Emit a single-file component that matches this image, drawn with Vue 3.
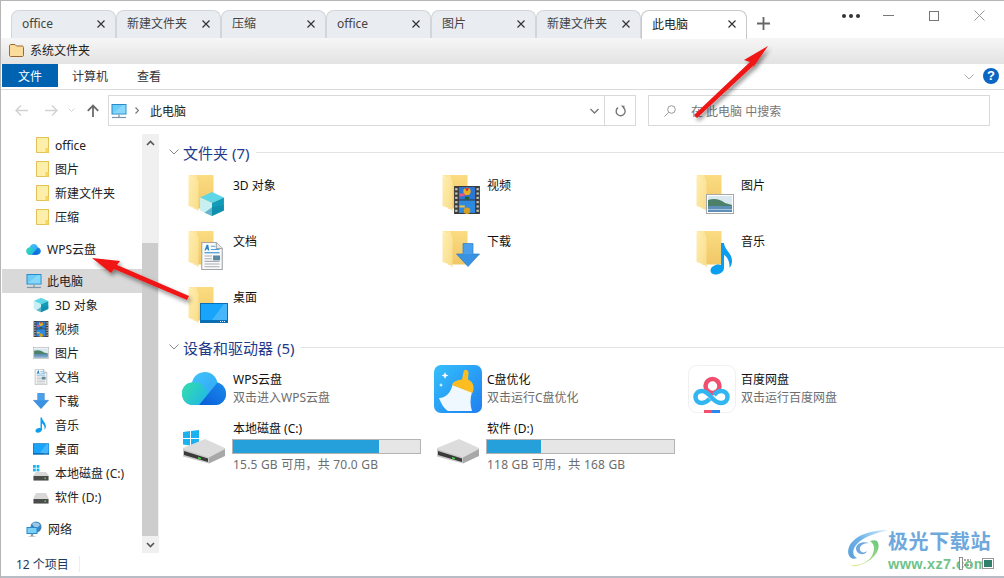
<script setup>
const tabs = [
  { t: 'office' }, { t: '新建文件夹' }, { t: '压缩' }, { t: 'office' },
  { t: '图片' }, { t: '新建文件夹' }, { t: '此电脑', active: true },
]
const quick = ['office', '图片', '新建文件夹', '压缩']
const pcItems = [
  { t: '3D 对象', i: 's3d' }, { t: '视频', i: 'svideo' }, { t: '图片', i: 'spic' },
  { t: '文档', i: 'sdoc' }, { t: '下载', i: 'sdown' }, { t: '音乐', i: 'smusic' },
  { t: '桌面', i: 'sdesk' }, { t: '本地磁盘 (C:)', i: 'sdiskc' }, { t: '软件 (D:)', i: 'sdisk' },
]
const folders = [
  { t: '3D 对象', i: 's3d', x: 20, y: 20, w: 26, h: 26 },
  { t: '视频', i: 'svideo', x: 21, y: 15, w: 26, h: 28 },
  { t: '图片', i: 'spic', x: 19, y: 23, w: 28, h: 20 },
  { t: '文档', i: 'sdoc', x: 22, y: 15, w: 22, h: 28 },
  { t: '下载', i: 'sdown', x: 23, y: 15, w: 24, h: 26 },
  { t: '音乐', i: 'smusic', x: 23, y: 15, w: 24, h: 33 },
  { t: '桌面', i: 'sdesk', x: 21, y: 20, w: 28, h: 20 },
]
const apps = [
  { t: 'WPS云盘', s: '双击进入WPS云盘', i: 'awps' },
  { t: 'C盘优化', s: '双击运行C盘优化', i: 'aclean' },
  { t: '百度网盘', s: '双击运行百度网盘', i: 'abaidu' },
]
const disks = [
  { t: '本地磁盘 (C:)', s: '15.5 GB 可用，共 70.0 GB', pct: 78, i: 'bdiskc' },
  { t: '软件 (D:)', s: '118 GB 可用，共 168 GB', pct: 29, i: 'bdisk' },
]
</script>

<template>
  <div class="win">
    <svg class="defs" width="0" height="0">
      <defs>
        <linearGradient id="fb" x1="0" y1="0" x2="0" y2="1"><stop offset="0" stop-color="#fbdc82"/><stop offset="1" stop-color="#f0c766"/></linearGradient>
        <linearGradient id="ff" x1="0" y1="0" x2="1" y2="1"><stop offset="0" stop-color="#ffeeb0"/><stop offset="1" stop-color="#f9dc8a"/></linearGradient>
        <linearGradient id="cl2" x1="0" y1="0" x2="1" y2="1"><stop offset="0" stop-color="#44c8fc"/><stop offset="1" stop-color="#2a9cf2"/></linearGradient>
        <linearGradient id="cl3" x1="0" y1="0" x2="1" y2="0.6"><stop offset="0" stop-color="#34e0a8"/><stop offset="1" stop-color="#22b8e4"/></linearGradient>
        <linearGradient id="cl4" x1="0" y1="1" x2="1" y2="0"><stop offset="0" stop-color="#0a5cd8"/><stop offset="1" stop-color="#1a8cec"/></linearGradient>
        <linearGradient id="cb" x1="0" y1="0" x2="1" y2="1"><stop offset="0" stop-color="#34c0fb"/><stop offset="1" stop-color="#1f7ff0"/></linearGradient>
        <linearGradient id="sw1" x1="1" y1="0" x2="0" y2="1"><stop offset="0" stop-color="#d8ecfb"/><stop offset="0.5" stop-color="#6db3e8"/><stop offset="1" stop-color="#5c9fdd"/></linearGradient>
        <linearGradient id="sw2" x1="1" y1="0" x2="0" y2="1"><stop offset="0" stop-color="#62c77c"/><stop offset="1" stop-color="#f0ec9c"/></linearGradient>

        <symbol id="s3d" viewBox="0 0 24 24">
          <path d="M12 1 23 6 12 11 1 6Z" fill="#5fd6e6"/><path d="M1 6 12 11V23L1 18Z" fill="#c8f0f2"/><path d="M23 6V18L12 23V11Z" fill="#129cb8"/><path d="M12 15 23 13V18L12 23 5 20Z" fill="#0f87a8" opacity=".55"/>
        </symbol>
        <symbol id="svideo" viewBox="0 0 24 26">
          <rect x="0" y="0" width="24" height="26" fill="#3c3c3c"/><rect x="4.5" y="1" width="15" height="11.5" fill="#2e76d6"/><rect x="4.5" y="13.5" width="15" height="11.5" fill="#2e8ae0"/>
          <circle cx="12" cy="5" r="3.4" fill="#e8b020"/><path d="M12 5 10 2H14Z" fill="#c62b3c"/><path d="M5 7H10V9L5 10Z" fill="#e35a80"/><rect x="10" y="10" width="4" height="2.5" fill="#226030"/>
          <circle cx="12" cy="23" r="3" fill="#d8a020"/><path d="M5 18H10V20H5Z" fill="#e8c050"/>
          <g fill="#c8c8c0"><rect x="1" y="2" width="2.2" height="2"/><rect x="1" y="6" width="2.2" height="2"/><rect x="1" y="10" width="2.2" height="2"/><rect x="1" y="14" width="2.2" height="2"/><rect x="1" y="18" width="2.2" height="2"/><rect x="1" y="22" width="2.2" height="2"/><rect x="20.8" y="2" width="2.2" height="2"/><rect x="20.8" y="6" width="2.2" height="2"/><rect x="20.8" y="10" width="2.2" height="2"/><rect x="20.8" y="14" width="2.2" height="2"/><rect x="20.8" y="18" width="2.2" height="2"/><rect x="20.8" y="22" width="2.2" height="2"/></g>
        </symbol>
        <symbol id="spic" viewBox="0 0 28 20">
          <rect x=".5" y=".5" width="27" height="19" fill="#fff" stroke="#a8a8a8"/><rect x="2" y="2" width="24" height="16" fill="#d8e8ee"/>
          <path d="M2 6C8 4 14 5 19 9L26 11V13H2Z" fill="#4d8068"/><rect x="2" y="12" width="24" height="6" fill="#5d8fb8"/><rect x="2" y="15" width="24" height="1" fill="#a8c6da"/>
        </symbol>
        <symbol id="sdoc" viewBox="0 0 20 26">
          <path d="M.5.5H14L19.5 6V25.5H.5Z" fill="#fafafa" stroke="#a0a4a8"/><path d="M14 .5V6H19.5" fill="#e8e8e8" stroke="#a0a4a8"/>
          <path d="M3 8 5 2.5H6.5L7.5 8H6.2L6 6.8H4.6L4.2 8Z" fill="#2a86c8"/><path d="M9 4H13M9 7H17" stroke="#4aa0da"/><path d="M3 10H17" stroke="#2f8ccc"/>
          <path d="M3 13H10M3 15.5H10M3 18H17M3 20.5H17M3 23H17" stroke="#a8adb2"/><rect x="11" y="12.5" width="6.5" height="4.5" fill="#5b8aa0"/>
        </symbol>
        <symbol id="sdown" viewBox="0 0 24 24">
          <path d="M7 .5H17V11H23.5L12 23.5.5 11H7Z" fill="#3a92e2" stroke="#2f7cc6" stroke-width=".7"/><path d="M7.5 1H16.5V11H7.5Z" fill="#4aa0ea"/>
        </symbol>
        <symbol id="smusic" viewBox="0 0 24 33">
          <path d="M11 1H14C14.500 8 22 11 22 19C22 22 21 24 19.500 26C20 20 17.500 15 14 13V26C14 30 9.500 32.500 5.500 32.500C2.500 32.500.5 31 .5 28.500C.5 25 5 22.500 8.500 22.500C9.500 22.500 10.400 22.700 11 23Z" fill="#0a9ef0"/>
        </symbol>
        <symbol id="sdesk" viewBox="0 0 28 20">
          <rect width="28" height="20" fill="#0a6eb4"/><rect x="1" y="1" width="26" height="16" fill="#18a4fa"/><path d="M12 17 24 1H27V17Z" fill="#45b6fb"/><path d="M20 18.500H26" stroke="#e8f4ff" stroke-dasharray="1 1"/>
        </symbol>
        <symbol id="sfolder" viewBox="0 0 26 41">
          <path d="M6 1H25.500V34.500H6Z" fill="url(#fb)"/><path d="M.5 1.200 10.500 9V37.500L8 34.600.5 32Z" fill="url(#ff)"/><path d="M.5 1 8 1 10.500 9Z" fill="#fde7a0"/>
        </symbol>
        <symbol id="snav" viewBox="0 0 13 16">
          <rect x=".5" y=".5" width="12" height="15" fill="#fdeeaa" stroke="#e3c257"/><path d="M9.500 11H12.500V15.500H9.500Z" fill="#f9d55a"/>
        </symbol>
        <symbol id="spc" viewBox="0 0 16 16">
          <rect x=".5" y="1" width="15" height="10.500" fill="#2a8ac8"/><rect x="1.500" y="2" width="13" height="8.500" fill="#6cccf8"/><path d="M2 10 12 2H14.500V10.500H2Z" fill="#9fe0fc" opacity=".55"/><path d="M7.300 11.500H8.700V14H7.300Z" fill="#8aa0ae"/><path d="M1 14.500H15" stroke="#7a96a8" stroke-width="1.200"/>
        </symbol>
        <symbol id="sdisk" viewBox="0 0 16 16">
          <path d="M3 4H13L15.500 9V14.500H.5V9Z" fill="#d8d8d8"/><rect x=".5" y="10" width="15" height="4.500" fill="#4c4c4c"/><rect x="11.500" y="11.500" width="1.500" height="1.500" fill="#44d944"/>
        </symbol>
        <symbol id="sdiskc" viewBox="0 0 16 16">
          <g fill="#1cb2f0"><rect x="0" y="0" width="2.800" height="2.800"/><rect x="3.600" y="0" width="2.800" height="2.800"/><rect x="0" y="3.600" width="2.800" height="2.800"/><rect x="3.600" y="3.600" width="2.800" height="2.800"/></g>
          <path d="M3 7H13L15.500 10V15.500H.5V10Z" fill="#d8d8d8"/><rect x=".5" y="11" width="15" height="4.500" fill="#4c4c4c"/><rect x="11.500" y="12.500" width="1.500" height="1.500" fill="#44d944"/>
        </symbol>
        <symbol id="scloud" viewBox="0 0 44 34">
          <path d="M33 33H11C4 33 0 27.500 0 21.500C0 15 5 10.500 10 10.500C11.500 4 17 0 23 0C29.500 0 34 4.500 35.500 10.500C40.500 12 44 16.500 44 22C44 28 39.500 33 33 33Z" fill="url(#cl2)"/>
          <path d="M11 10.500C5 10.500 0 15 0 21.500C0 27.500 4 33 11 33H17L28 22 20 13C17 10.500 14 10 11 10.500Z" fill="url(#cl3)"/>
          <path d="M44 22C44 28 39.500 33 33 33H17L35.500 10.500C40.500 12 44 16.500 44 22Z" fill="url(#cl4)"/>
        </symbol>
        <symbol id="sclean" viewBox="0 0 48 48">
          <rect width="48" height="48" rx="7" fill="url(#cb)"/>
          <path d="M5 33C12 33 17 27 18.500 20L38 27C36 34 36 40 38 46L14 46C10 44 7 38 5 33Z" fill="#f0f8ff"/>
          <path d="M18 20C19 16 24 15 28 14.500L29.500 7C30 4 34 4 34.500 7.500L34 14.500C38 16 41.500 21 38.500 28Z" fill="#fbbd20"/>
          <path d="M11 7 12 9.500 14.500 10.500 12 11.500 11 14 10 11.500 7.500 10.500 10 9.500Z" fill="#fff"/><path d="M7 18 7.700 19.500 9 20 7.700 20.700 7 22 6.300 20.700 5 20 6.300 19.500Z" fill="#dff"/>
        </symbol>
        <symbol id="sbaidu" viewBox="0 0 48 48">
          <rect x=".5" y=".5" width="47" height="47" rx="8" fill="#fff" stroke="#f0f0f0"/>
          <circle cx="24.500" cy="21" r="7" fill="none" stroke="#f0506e" stroke-width="4.500"/>
          <path d="M21.500 34C19 36.500 16.500 38 14 38C10 38 7.500 35.500 7.500 32C7.500 28.500 10 26 14 26C19 26 23 32 25.500 34.500C28 37 30 38 33 38C37 38 39.500 35.500 39.500 32C39.500 28.500 37 26 33 26C30 26 28 27.500 26 30" fill="none" stroke="#32b6f2" stroke-width="4.500"/>
          <rect x="16" y="45" width="8" height="3" fill="#f0506e"/><rect x="24" y="45" width="8" height="3" fill="#2a86f0"/>
        </symbol>
        <symbol id="shdd" viewBox="0 0 44 26">
          <path d="M22 1 42 10V14L26 20 0 12V10Z" fill="#dcdcdc"/>
          <path d="M42 11V18L26 25.500V19.500Z" fill="#a8a8a8"/>
          <path d="M0 11 26 19.500V25.500L0 18.500Z" fill="#c8c8c8"/>
          <path d="M1 13 25 20.500V24L1 17Z" fill="#3a3a3a"/>
          <path d="M15 19 18 20V21.500L15 20.500Z" fill="#44d944"/>
        </symbol>
      </defs>
    </svg>

    <div class="tabbar">
      <div v-for="(tab, i) in tabs" :key="i" class="tab" :class="{ active: tab.active }">
        <span class="tab-label">{{ tab.t }}</span>
        <svg class="tab-x" width="8" height="8" viewBox="0 0 8 8"><path d="M.5.5 7.500 7.500M7.500.5.500 7.500" stroke="#333" stroke-width="1.200"/></svg>
      </div>
      <svg class="plus" width="13" height="13" viewBox="0 0 13 13"><path d="M6.500 0V13M0 6.500H13" stroke="#666" stroke-width="1.800"/></svg>
      <div class="dots"><i></i><i></i><i></i></div>
      <div class="winctl">
        <svg width="11" height="11" viewBox="0 0 11 11"><path d="M0 5.500H11" stroke="#777"/></svg>
        <svg width="10" height="10" viewBox="0 0 10 10"><rect x=".5" y=".5" width="9" height="9" fill="none" stroke="#777"/></svg>
        <svg width="11" height="11" viewBox="0 0 11 11"><path d="M.5.500 10.500 10.500M10.500.5.500 10.500" stroke="#999"/></svg>
      </div>
    </div>

    <div class="titlestrip">
      <svg width="15" height="13" viewBox="0 0 15 13"><path d="M.5 2C.5 1 1 .5 2 .5H6L7.500 2H13C14 2 14.500 2.500 14.500 3.500V11C14.500 12 14 12.500 13 12.500H2C1 12.500.5 12 .5 11Z" fill="#fbdc9a" stroke="#9c6a30"/></svg>
      <span>系统文件夹</span>
    </div>

    <div class="ribbon">
      <div class="rtab file">文件</div>
      <div class="rtab">计算机</div>
      <div class="rtab second">查看</div>
      <svg class="rchev" width="10" height="6" viewBox="0 0 10 6"><path d="M.5.5 5 5 9.500.5" fill="none" stroke="#aaa"/></svg>
      <div class="help">?</div>
    </div>

    <div class="navbar">
      <div class="navbtns">
        <svg width="13" height="11" viewBox="0 0 13 11"><path d="M6 .5 1 5.500 6 10.500M1 5.500H13" fill="none" stroke="#d2d2d2" stroke-width="1.500"/></svg>
        <svg width="13" height="11" viewBox="0 0 13 11"><path d="M7 .5 12 5.500 7 10.500M12 5.500H0" fill="none" stroke="#d2d2d2" stroke-width="1.500"/></svg>
        <svg width="7" height="4" viewBox="0 0 7 4"><path d="M.5.5 3.500 3.500 6.500.5" fill="none" stroke="#d2d2d2"/></svg>
        <svg width="12" height="13" viewBox="0 0 12 13"><path d="M6 13V1.500M.8 6.800 6 1.500 11.200 6.800" fill="none" stroke="#6a6a6a" stroke-width="1.800"/></svg>
      </div>
      <div class="address">
        <svg width="16" height="16"><use href="#spc"/></svg>
        <svg class="crumb" width="4" height="7" viewBox="0 0 4 7"><path d="M.5.5 3.500 3.500.5 6.500" fill="none" stroke="#777" stroke-width="1.200"/></svg>
        <span>此电脑</span>
        <svg class="adrop" width="9" height="6" viewBox="0 0 9 6"><path d="M.5 1 4.500 5 8.500 1" fill="none" stroke="#777" stroke-width="1.400"/></svg>
        <div class="refresh">
          <svg width="11" height="12" viewBox="0 0 11 12"><path d="M8.800 3A4.500 4.500 0 1 1 3 2.600" fill="none" stroke="#777" stroke-width="1.400"/><path d="M6 .5 9.500 .8 9.200 4.500Z" fill="#777"/></svg>
        </div>
      </div>
      <div class="search">
        <svg width="12" height="12" viewBox="0 0 12 12"><circle cx="7.500" cy="4.500" r="3.800" fill="none" stroke="#999"/><path d="M4.800 7.200.5 11.500" stroke="#999"/></svg>
        <span>在 此电脑 中搜索</span>
      </div>
    </div>

    <div class="main">
      <aside class="side">
        <div class="tree">
          <div v-for="q in quick" :key="q" class="row sub">
            <svg class="navf" width="13" height="16"><use href="#snav"/></svg><span>{{ q }}</span>
          </div>
          <div class="row top gapped">
            <svg width="15" height="11"><use href="#scloud"/></svg><span>WPS云盘</span>
          </div>
          <div class="row top gapped sel">
            <svg width="16" height="16"><use href="#spc"/></svg><span>此电脑</span>
          </div>
          <div v-for="p in pcItems" :key="p.t" class="row sub">
            <span class="slot"><svg width="16" height="16"><use :href="'#' + p.i"/></svg></span><span>{{ p.t }}</span>
          </div>
          <div class="row top gapped">
            <svg width="16" height="16" viewBox="0 0 16 16">
              <circle cx="10" cy="6" r="5.500" fill="#3a84c0"/><path d="M6 3C8 1 12 1 14 4L10 8Z" fill="#9cc8e4"/>
              <rect x=".5" y="6" width="11" height="7" fill="#2a8ac8"/><rect x="1.500" y="7" width="9" height="5" fill="#7ad0f8"/><path d="M5 13H7V15H5ZM2.500 15.500H9.500" fill="#8aa0ae" stroke="#8aa0ae" stroke-width=".5"/>
            </svg><span>网络</span>
          </div>
        </div>
        <div class="scroll">
          <svg class="sarrow" width="9" height="6" viewBox="0 0 9 6"><path d="M1 5 4.500 1.500 8 5" fill="none" stroke="#555" stroke-width="1.600"/></svg>
          <div class="strack"><div class="sthumb"></div></div>
          <div class="sdown"><svg width="9" height="6" viewBox="0 0 9 6"><path d="M1 1 4.500 4.500 8 1" fill="none" stroke="#555" stroke-width="1.600"/></svg></div>
        </div>
      </aside>

      <main class="content">
        <div class="group">
          <svg width="10" height="6" viewBox="0 0 10 6"><path d="M.5.5 5 5 9.500.5" fill="none" stroke="#888"/></svg>
          <span>文件夹 (7)</span><i></i>
        </div>
        <div class="grid folders">
          <div v-for="f in folders" :key="f.t" class="tile ftile">
            <svg class="fic" width="54" height="48" viewBox="0 0 54 48">
              <use href="#sfolder" x="9" y="3" width="26" height="41"/>
              <use :href="'#' + f.i" :x="f.x" :y="f.y" :width="f.w" :height="f.h"/>
            </svg>
            <span class="fname">{{ f.t }}</span>
          </div>
        </div>

        <div class="group devices">
          <svg width="10" height="6" viewBox="0 0 10 6"><path d="M.5.5 5 5 9.500.5" fill="none" stroke="#888"/></svg>
          <span>设备和驱动器 (5)</span><i></i>
        </div>
        <div class="grid drives">
          <div v-for="a in apps" :key="a.t" class="tile atile">
            <span class="aic">
              <svg v-if="a.i === 'awps'" class="wpsic" width="44" height="34"><use href="#scloud"/></svg>
              <svg v-else width="48" height="48"><use :href="a.i === 'aclean' ? '#sclean' : '#sbaidu'"/></svg>
            </span>
            <div class="atxt"><div class="an">{{ a.t }}</div><div class="as">{{ a.s }}</div></div>
          </div>
          <div v-for="d in disks" :key="d.t" class="tile dtile">
            <span class="dic">
              <svg v-if="d.i === 'bdiskc'" class="win10" width="16" height="17" viewBox="0 0 16 17"><g fill="#1cb2f0"><path d="M0 2 7 1V8H0Z"/><path d="M8 1 16 0V8H8Z"/><path d="M0 9H7V15.500L0 14.500Z"/><path d="M8 9H16V17L8 15.700Z"/></g></svg>
              <svg class="hdd" width="44" height="26"><use href="#shdd"/></svg>
            </span>
            <div class="dtxt">
              <div class="an">{{ d.t }}</div>
              <div class="bar"><div class="fill" :style="{ width: d.pct + '%' }"></div></div>
              <div class="as ds">{{ d.s }}</div>
            </div>
          </div>
        </div>
      </main>
    </div>

    <div class="status"><span>12 个项目</span><i></i></div>

    <svg class="arrows" width="1004" height="578" viewBox="0 0 1004 578">
      <defs><filter id="ash" x="-30%" y="-30%" width="160%" height="160%"><feDropShadow dx="2" dy="3" stdDeviation="2" flood-color="#000" flood-opacity=".45"/></filter></defs>
      <g filter="url(#ash)" fill="#f01414">
        <path d="M768 46 744 60 750 62 694 115 697 118 754 65 752 69Z"/>
        <path d="M92 258 120 261 117 265 189 296 187 300 114 269 111 273Z"/>
      </g>
    </svg>

    <div class="mark">
      <svg class="swirl" width="44" height="40" viewBox="0 0 44 40">
        <path d="M42 2C26 2 8 7 3 19C0 27 5 33 11 30C6 28 6 21 11 16C17 9 30 5 42 2Z" fill="url(#sw1)"/>
        <path d="M10 21C10 15 17 13 23 15C17 15 13 18 14 22C15 25 19 25 21 23C19 28 11 27 10 21Z" fill="#6fa9e0"/>
        <path d="M31 13C36 20 29 33 11 38C8 39 6 38 5 37C16 38 25 32 27 25C29 20 28 16 24 13C27 12 29 12 31 13Z" fill="url(#sw2)"/>
      </svg>
      <div class="mtxt">
        <div class="m1">极光下载站</div>
        <div class="m2">www.xz7.com</div>
      </div>
    </div>
    <svg class="stray" width="36" height="13" viewBox="0 0 36 13">
      <rect x=".5" y=".5" width="3" height="12" fill="#fff" stroke="#777" stroke-width=".8"/>
      <path d="M5 3H12M5 8H12" stroke="#555" stroke-dasharray="2 1"/>
      <rect x="23.500" y="1.500" width="11" height="10" fill="#fff" stroke="#999"/><rect x="25" y="3" width="8" height="7" fill="#2f7f6a"/>
    </svg>
  </div>
</template>

<style>
html, body { margin: 0; padding: 0; overflow: hidden; background: #fff; }
</style>

<style scoped>
.win {
  position: relative; width: 1004px; height: 578px; overflow: hidden; box-sizing: border-box;
  background: #fff; border-top: 1px solid #b5b5b5; border-left: 1px solid #b5b5b5;
  font-family: "Noto Sans", "Noto Sans CJK SC", sans-serif; font-size: 12px; color: #222;
  display: flex; flex-direction: column;
}
.defs { position: absolute; }
svg { display: block; flex: none; }

.tabbar { height: 37px; display: flex; align-items: flex-start; padding: 9px 0 0 10px; box-sizing: border-box; flex: none; position: relative; }
.tab {
  width: 105px; height: 28px; box-sizing: border-box; display: flex; align-items: center; justify-content: space-between;
  padding: 0 10px 3px 10px; background: #e9ecf0; border: 1px solid #d2d5d9; border-bottom: 0; border-radius: 8px 8px 0 0; color: #444;
}
.tab-x { margin-top: 1px; }
.tab.active { background: #fff; color: #222; width: 106px; border-color: #c9c9c9; height: 29px; }
.plus { margin: 7px 0 0 10px; }
.dots { position: absolute; left: 841px; top: 13px; display: flex; gap: 3px; }
.dots i { width: 4px; height: 4px; border-radius: 50%; background: #333; }
.winctl { position: absolute; left: 882px; top: 9px; width: 102px; display: flex; justify-content: space-between; align-items: center; }

.titlestrip {
  height: 26px; flex: none; display: flex; align-items: center; gap: 6px; padding: 0 0 2px 8px; box-sizing: border-box;
  background: linear-gradient(#f6f6f6, #e3e3e3); color: #222;
}
.ribbon { height: 26px; flex: none; display: flex; align-items: flex-start; position: relative; border-bottom: 1px solid #dadada; box-sizing: border-box; }
.rtab { height: 23px; line-height: 25px; padding: 0 14px; color: #333; }
.rtab.file { width: 56px; box-sizing: border-box; margin-left: 1px; padding: 0; text-align: center; background: #0063b1; color: #fff; margin-right: 0; }
.rtab.second { padding: 0 0 0 15px; }
.rchev { position: absolute; left: 963px; top: 10px; }
.help { position: absolute; left: 982px; top: 4px; width: 16px; height: 16px; border-radius: 50%; background: #0a66c2; color: #fff; font: bold 13px/16px "Liberation Sans", sans-serif; text-align: center; }

.navbar { height: 44px; flex: none; display: flex; align-items: flex-start; padding-top: 5px; box-sizing: border-box; }
.navbtns { width: 107px; height: 30px; display: flex; align-items: center; padding-left: 14px; gap: 17px; box-sizing: border-box; }
.navbtns svg:nth-child(3) { margin: 0 -8px 0 -7px; }
.navbtns svg:nth-child(4) { margin-left: 3px; }
.address { width: 528px; height: 31px; box-sizing: border-box; border: 1px solid #d9d9d9; display: flex; align-items: center; padding-left: 2px; position: relative; color: #222; }
.crumb { margin: 0 11px 0 8px; }
.adrop { position: absolute; left: 481px; top: 12px; }
.refresh { position: absolute; right: 0; top: 0; bottom: 0; width: 30px; border-left: 1px solid #d9d9d9; display: flex; align-items: center; justify-content: center; }
.search { width: 342px; height: 31px; margin-left: 12px; box-sizing: border-box; border: 1px solid #d9d9d9; display: flex; align-items: center; gap: 15px; padding-left: 15px; color: #777; }

.main { flex: 1; display: flex; min-height: 0; }
.side { width: 157px; flex: none; display: flex; border-right: 1px solid #f0f0f0; box-sizing: content-box; }
.tree { width: 141px; flex: none; margin-top: -1px; }
.row { height: 24px; display: flex; align-items: center; }
.row.sub { padding-left: 33px; gap: 7px; }
.row.sub .slot { width: 14px; display: flex; justify-content: center; margin: 0; }
.row.sub .navf { margin-left: 2px; margin-right: -1px; }
.row.top { padding-left: 25px; gap: 6px; }
.row.gapped { margin-top: 8px; }
.row.sel { background: #d9d9d9; margin-left: 1px; padding-left: 24px; margin-top: 8px; gap: 5px; }
.scroll { width: 16px; flex: none; display: flex; flex-direction: column; background: #f0f0f0; height: 419px; margin-top: 0; }
.sarrow { margin: 6px auto 4px; }
.strack { flex: 1; position: relative; display: flex; flex-direction: column; justify-content: flex-end; }
.sthumb { height: 293px; background: #cdcdcd; }
.sdown { height: 17px; display: flex; align-items: center; justify-content: center; }

.content { flex: 1; padding-top: 8px; box-sizing: border-box; min-width: 0; }
.group { display: flex; align-items: center; height: 20px; padding-left: 10px; color: #1e3a8a; font-size: 15px; }
.group span { margin-left: 4px; white-space: nowrap; }
.group i { flex: 1; height: 1px; background: #e3e3e3; margin-left: 7px; }
.group.devices { margin-top: -2px; }
.grid { display: grid; grid-template-columns: repeat(3, 254px); padding-left: 20px; }
.folders { margin-top: 9px; }
.drives { margin-top: 6px; }
.tile { display: flex; color: #111; }
.ftile { height: 56px; }
.fname { padding-top: 6px; line-height: 18px; }
.atile { height: 51px; align-items: center; padding-top: 1px; box-sizing: border-box; }
.aic { width: 54px; flex: none; display: flex; align-items: center; padding-left: 1px; box-sizing: border-box; margin-top: -1px; }
.wpsic { margin-left: 2px; }
.an { line-height: 18px; }
.as { line-height: 18px; color: #6d6d6d; }
.ds { letter-spacing: .2px; }
.dtile { height: 55px; padding-top: 6px; box-sizing: border-box; }
.dic { width: 54px; flex: none; position: relative; display: block; }
.win10 { position: absolute; left: 4px; top: 10px; }
.hdd { position: absolute; left: 4px; top: 18px; }
.dtxt { width: 189px; }
.bar { width: 189px; height: 15px; border: 1px solid #b4b4b4; background: #e6e6e6; box-sizing: border-box; margin: 1px 0 2px -1px; }
.fill { height: 100%; background: #26a0da; }

.status { height: 25px; flex: none; display: flex; align-items: center; padding-left: 15px; color: #1e3a5a; box-sizing: border-box; padding-bottom: 2px; border-bottom: 2px solid #b8bcc4; }
.status i { width: 1px; height: 16px; background: #eee; margin-left: 10px; }

.arrows { position: absolute; left: -1px; top: -1px; pointer-events: none; }

.mark { position: absolute; left: 845px; top: 525px; display: flex; gap: 0; }
.swirl { margin-top: 2px; }
.mtxt { margin-left: -2px; }
.m1 { font-size: 20px; font-weight: 700; line-height: 26px; color: #6fa8dc; letter-spacing: .6px; white-space: nowrap; margin-top: 3px; }
.m2 { font: 700 14.500px/16px "Liberation Sans", sans-serif; color: #6fc389; letter-spacing: .4px; margin-top: 1px; }
.stray { position: absolute; left: 958px; top: 556px; }
</style>
